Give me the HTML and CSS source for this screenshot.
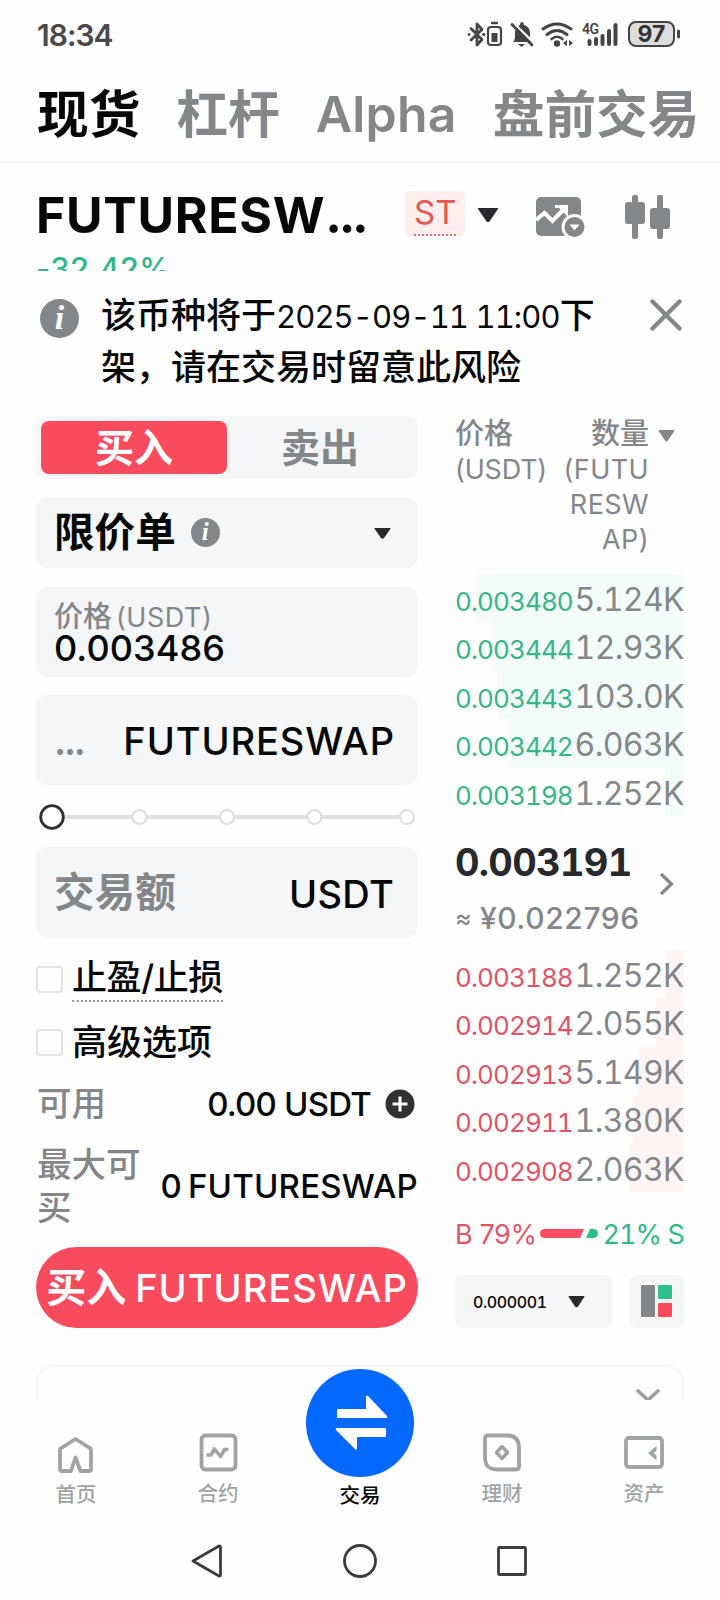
FILE: index.html
```html
<!DOCTYPE html>
<html lang="zh-CN">
<head>
    <meta charset="UTF-8">
    <title>现货交易</title>
    <meta name="viewport" content="width=device-width, initial-scale=1">
    <link rel="stylesheet" href="styles.css">
</head>
<body>
    <div class="status">
        <span class="clock">18:34</span>
        <svg class="status-icons" width="216" height="30" viewBox="0 0 216 30">
            <g fill="none" stroke="#444" stroke-width="2.8" stroke-linecap="round" stroke-linejoin="round">
                <path d="M3 8.500l11 11-5 5.500V4l5 5.500-11 10.500"/>
                <path d="M.5 14.500h.5M15.500 14.500h.5"/>
                <rect x="20" y="7" width="13" height="18" rx="3" stroke-width="2.200"/>
                <path d="M24 3h5" stroke-width="2.400"/>
            </g>
            <rect x="23.500" y="13" width="6" height="9" fill="#444"/>
            <path d="M45 22c2-2 2-4 2-8 0-6 2-8 5-9 0-4 4-4 4 0 4 1 6 4 6 9 0 4 0 6 3 8z" fill="#444"/>
            <path d="M50 24h7l-3.500 3z" fill="#444"/>
            <path d="M44 2l22 21" stroke="#fefefe" stroke-width="2.500"/>
            <path d="M44 4.500l20 20.500" stroke="#444" stroke-width="2.800" stroke-linecap="round"/>
            <g fill="none" stroke="#444" stroke-width="3" stroke-linecap="round">
                <path d="M75 9q14-10 28 0"/>
                <path d="M79 14.500q10-8 20 0"/>
                <path d="M83.500 19q5.500-4.500 11 0" stroke-width="2.600"/>
            </g>
            <circle cx="89" cy="23.500" r="3.200" fill="#444"/>
            <path d="M99 20v6l-4-3zM101 20v6l4-3z" fill="#444"/>
            <text class="net" x="114" y="14">4G</text>
            <g stroke="#444" stroke-width="4" stroke-linecap="round">
                <path d="M121.500 21v3M128 19v5M134.500 16v8M141 11v13M147.500 5v19"/>
            </g>
            <rect x="161" y="2" width="45" height="24" rx="7" fill="#ddd" stroke="#444" stroke-width="2"/>
            <path d="M210.500 11v6" stroke="#444" stroke-width="3" stroke-linecap="round"/>
            <text class="charge" x="183.500" y="22">97</text>
        </svg>
    </div>

    <div class="tabs">
        <span class="tab active">现货</span>
        <span class="tab">杠杆</span>
        <span class="tab latin">Alpha</span>
        <span class="tab last">盘前交易</span>
    </div>

    <div class="pair">
        <span class="pair-name">FUTURESW<span>...</span></span>
        <span class="st"><span>ST</span></span>
        <svg class="pair-caret" width="22" height="16" viewBox="0 0 22 16"><path d="M1.500 1h19q1 0 .5 1l-8.500 12.500q-1.500 1.500-3 0L1 2q-.5-1 .5-1z" fill="#28292c"/></svg>
        <svg class="pair-chart" width="50" height="42" viewBox="0 0 50 42">
            <rect x="0" y="1" width="45" height="39" rx="5" fill="#84878a"/>
            <path d="M0 24l8.500-7 8 8L28 13" fill="none" stroke="#fff" stroke-width="4"/>
            <path d="M19 9h13v12l-4-4-5-5-4 0z" fill="#fff"/>
            <circle cx="38.500" cy="31" r="13" fill="#fefefe"/>
            <circle cx="38.500" cy="31" r="10" fill="#84878a"/>
            <path d="M33.500 28.500h10l-5 6z" fill="#fff"/>
        </svg>
        <svg class="pair-candles" width="46" height="46" viewBox="0 0 46 46" fill="#84878a">
            <rect x="0" y="8" width="20" height="22" rx="3"/>
            <rect x="7" y="1" width="6" height="44" rx="2"/>
            <rect x="25" y="14" width="20" height="21" rx="3"/>
            <rect x="32" y="1" width="6" height="44" rx="2"/>
        </svg>
    </div>
    <div class="change">-32.42%</div>

    <div class="notice">
        <span class="info">i</span>
        <p>该币种将于<span class="date">2025-09-11 11:00</span>下架，请在交易时留意此风险</p>
        <svg width="32" height="32" viewBox="0 0 32 32"><path d="M2.500 2.500l27 27M29.500 2.500l-27 27" stroke="#84878a" stroke-width="4.400" stroke-linecap="round"/></svg>
    </div>

    <div class="trade">
        <div class="form">
            <div class="sides">
                <span class="side buy">买入</span>
                <span class="side">卖出</span>
            </div>
            <div class="field type">
                <span class="type-name">限价单</span>
                <span class="info small">i</span>
                <svg width="17" height="13" viewBox="0 0 17 13"><path d="M1 1h15q1 0 .3 1L10 11q-1.500 1.500-3 0L.7 2Q0 1 1 1z" fill="#28292c"/></svg>
            </div>
            <div class="field price">
                <span class="hint">价格<span class="hint-unit">(USDT)</span></span>
                <span class="value">0.003486</span>
            </div>
            <div class="field amount">
                <span class="dots">...</span>
                <span class="unit">FUTURESWAP</span>
            </div>
            <svg class="slider" width="382" height="32" viewBox="0 0 382 32" fill="#fff">
                <path d="M16 16h355" stroke="#e0e1e2" stroke-width="4"/>
                <g stroke="#dcddde" stroke-width="2">
                    <circle cx="103.500" cy="16" r="7"/>
                    <circle cx="191" cy="16" r="7"/>
                    <circle cx="278.500" cy="16" r="7"/>
                    <circle cx="371" cy="16" r="7"/>
                </g>
                <circle cx="16" cy="16" r="11.300" stroke="#303133" stroke-width="2.800"/>
            </svg>
            <div class="field total">
                <span class="placeholder">交易额</span>
                <span class="unit">USDT</span>
            </div>
            <div class="check"><i></i><span class="dotted">止盈/止损</span></div>
            <div class="check second"><i></i><span>高级选项</span></div>
            <div class="avail">
                <span class="key">可用</span>
                <span class="num">0.00 USDT</span>
                <svg width="30" height="30" viewBox="0 0 30 30"><circle cx="15" cy="15" r="14.500" fill="#303133"/><path d="M15 7.500v15M7.500 15h15" stroke="#fff" stroke-width="3"/></svg>
            </div>
            <div class="max">
                <span class="key">最大可买</span>
                <span class="num">0 FUTURESWAP</span>
            </div>
            <div class="submit"><b>买入</b><span>FUTURESWAP</span></div>
        </div>

        <div class="book">
            <div class="book-head">
                <div>价格<span>(USDT)</span></div>
                <div class="qty">数量<span>(FUTU<br>RESW<br>AP)</span></div>
                <svg width="17" height="12" viewBox="0 0 17 12"><path d="M1 0h15q1 0 .3 1L10 10.500q-1.500 1.500-3 0L.7 1Q0 0 1 0z" fill="#84878a"/></svg>
            </div>
            <div class="rows asks">
                <div class="row"><i style="width:208px"></i><span>0.003480</span><b>5.124K</b></div>
                <div class="row"><i style="width:191px"></i><span>0.003444</span><b>12.93K</b></div>
                <div class="row"><i style="width:186px"></i><span>0.003443</span><b>103.0K</b></div>
                <div class="row"><i style="width:175px"></i><span>0.003442</span><b>6.063K</b></div>
                <div class="row"><i style="width:18px"></i><span>0.003198</span><b>1.252K</b></div>
            </div>
            <div class="last-price">
                <div>
                    <div class="now">0.003191</div>
                    <div class="fiat"><span>≈</span> ¥0.022796</div>
                </div>
                <svg width="16" height="26" viewBox="0 0 16 26"><path d="M2 3l10.500 10L2 23" fill="none" stroke="#84878a" stroke-width="3.200"/></svg>
            </div>
            <div class="rows bids">
                <div class="row"><i style="width:18px"></i><span>0.003188</span><b>1.252K</b></div>
                <div class="row"><i style="width:28px"></i><span>0.002914</span><b>2.055K</b></div>
                <div class="row"><i style="width:45px"></i><span>0.002913</span><b>5.149K</b></div>
                <div class="row"><i style="width:51px"></i><span>0.002911</span><b>1.380K</b></div>
                <div class="row"><i style="width:55px"></i><span>0.002908</span><b>2.063K</b></div>
            </div>
            <div class="ratio">
                <span class="b">B 79%</span>
                <svg width="58" height="10" viewBox="0 0 58 10"><path d="M4.500 0H44l-4 9H4.500a4.500 4.500 0 0 1 0-9z" fill="#f84c61"/><path d="M50 0h3.500a4.500 4.500 0 0 1 0 9H46z" fill="#2bbd88"/></svg>
                <span class="s">21% S</span>
            </div>
            <div class="tools">
                <div class="step">
                    <span>0.000001</span>
                    <svg width="17" height="13" viewBox="0 0 17 13"><path d="M1 1h15q1 0 .3 1L10 11.500q-1.500 1.500-3 0L.7 2Q0 1 1 1z" fill="#28292c"/></svg>
                </div>
                <div class="layout">
                    <svg width="31" height="32" viewBox="0 0 31 32"><rect width="14" height="32" rx="1" fill="#84878a"/><rect x="17" width="14" height="14" rx="1" fill="#2bc08c"/><rect x="17" y="18" width="14" height="14" rx="1" fill="#f84c5c"/></svg>
                </div>
            </div>
        </div>
    </div>

    <div class="sheet">
        <svg width="24" height="14" viewBox="0 0 24 14"><path d="M2 2l10 9L22 2" fill="none" stroke="#9b9ea0" stroke-width="3.600" stroke-linecap="round"/></svg>
    </div>

    <div class="nav">
        <div class="item low">
            <svg width="40" height="40" viewBox="0 0 40 40"><path d="M4.500 14.500L19.500 5l15 9.500q.5 1 .5 2V35q0 2-2 2h-8.500l-5-13.500L15 37H6q-2 0-2-2V16.500q0-1.500.5-2z"/></svg>
            <span>首页</span>
        </div>
        <div class="item">
            <svg width="40" height="40" viewBox="0 0 40 40"><rect x="3.500" y="3.500" width="34" height="34" rx="4"/><path d="M8.500 23h4.500l3.500-6 6 7.500 4-7h4" stroke-width="3.600"/></svg>
            <span>合约</span>
        </div>
        <div class="item low main">
            <svg class="swap" width="108" height="108" viewBox="0 0 108 108"><circle cx="54" cy="54" r="54"/><path d="M32 40h28V27q1-1 2 0l19 20q1 2-1 2H32q-1 0-1-1v-7q0-1 1-1zM79 59q1 0 1 1v7q0 1-1 1H51v12q-1 1-2 0L30 61q-1-2 1-2z"/></svg>
            <span>交易</span>
        </div>
        <div class="item">
            <svg width="40" height="40" viewBox="0 0 40 40"><path d="M6 3.500h19q12 0 12 12v19q0 3-3 3H15q-12 0-12-12v-19q0-3 3-3z"/><path d="M20 14.500l5.500 6-5.500 6-5.500-6z" stroke-width="3.400"/></svg>
            <span>理财</span>
        </div>
        <div class="item">
            <svg width="40" height="40" viewBox="0 0 40 40"><rect x="2" y="6" width="36" height="29" rx="3"/><path d="M32.500 14v5l-3 2 3 2.500v5l-8.500-7.500z" fill="#a0a3a5" stroke="none"/></svg>
            <span>资产</span>
        </div>
    </div>

    <div class="system">
        <svg width="34" height="34" viewBox="0 0 34 34"><path d="M2 17L28 2q1.500 0 1.500 1.500v27q0 1.500-1.500 1.500z"/></svg>
        <svg width="34" height="34" viewBox="0 0 34 34"><circle cx="17" cy="17" r="15.500"/></svg>
        <svg width="34" height="34" viewBox="0 0 34 34"><rect x="3.500" y="3.500" width="27" height="27" rx="1"/></svg>
    </div>
</body>
</html>
```
FILE: styles.css
```css
* { box-sizing: border-box; }
body {
    margin: 0; width: 720px; height: 1600px; overflow: hidden;
    background: #fefefe; color: #060808;
    font-family: Inter, "Noto Sans CJK SC", sans-serif;
    font-weight: 500; white-space: nowrap;
}
svg { display: block; flex: none; }
i { font-style: normal; }

.status { display: flex; justify-content: space-between; height: 72px; padding: 20px 36px 0 37px; }
.clock { font: 600 30px/30px Inter, sans-serif; color: #4a4a4a; letter-spacing: -1px; }
.net { font: 600 14px Roboto, sans-serif; fill: #444; letter-spacing: -0.5px; }
.charge { font: 700 23px Inter, sans-serif; fill: #333; text-anchor: middle; }

.tabs { display: flex; height: 91px; padding: 5px 0 0 37px; border-bottom: 2px solid #f3f4f5; }
.tab { margin-right: 36px; font-size: 51.7px; font-weight: 700; line-height: 74px; color: #84878a; }
.tab.active { color: #060808; }
.tab.latin { font-size: 50px; font-weight: 600; letter-spacing: 0.2px; }
.tab.last { margin-right: 0; }

.pair { display: flex; height: 94px; padding-left: 36px; }
.pair-name { width: 369px; padding-top: 22px; font-size: 50px; font-weight: 700; line-height: 60px; letter-spacing: 0.7px; }
.pair-name span { letter-spacing: -3.4px; }
.st { width: 60px; height: 45px; margin-top: 28px; padding: 3px 9px 0; border-radius: 5px; background: #feeeed; }
.st span { display: block; height: 42px; border-bottom: 2px dotted #e0706a; font-size: 33px; font-weight: 400; line-height: 36px; color: #e4584f; }
.pair-caret { margin: 44px 0 0 12px; }
.pair-chart { margin: 33px 0 0 37px; }
.pair-candles { margin: 31px 0 0 39px; }

.change { height: 14px; margin-left: 36px; overflow: hidden; font-size: 31px; line-height: 24px; letter-spacing: 0.3px; color: #2fb888; }

.notice { display: flex; height: 145px; padding: 19px 0 0 40px; }
.notice p { width: 500px; margin: 0 0 0 22px; font-size: 35px; line-height: 51px; white-space: normal; }
.notice p .date { font-size: 31px; font-weight: 400; font-feature-settings: "tnum"; letter-spacing: -0.9px; white-space: nowrap; }
.notice svg { margin: 9px 0 0 49px; }
.info {
    width: 39px; height: 39px; margin-top: 9px; flex: none; border-radius: 50%; background: #84878a; color: #fff;
    font: italic 700 34px/37px "Liberation Serif", serif; text-align: center;
}
.info.small { width: 29px; height: 29px; margin: 0 0 0 15px; font-size: 25px; line-height: 27px; }

.trade { display: flex; height: 949px; padding-left: 36px; }
.form { width: 382px; }
.sides { display: flex; height: 63px; padding: 5px; border-radius: 12px; background: #f4f6f7; }
.side { flex: 1; border-radius: 8px; font-size: 39px; line-height: 54px; text-align: center; color: #84878a; font-weight: 700; }
.side.buy { background: #f84c5e; color: #fff; }
.field { display: flex; align-items: center; border-radius: 12px; background: #f4f6f7; padding: 0 24px 0 18px; }
.type { height: 71px; margin-top: 18px; font-size: 40.6px; font-weight: 700; padding-right: 27px; }
.type-name { height: 71px; line-height: 71px; }
.type svg { margin-left: auto; margin-top: 2px; }
.price { height: 90px; margin-top: 19px; flex-direction: column; align-items: flex-start; padding-top: 16px; }
.hint { height: 27px; font-size: 29px; line-height: 28px; color: #84878a; }
.hint-unit { margin-left: 4px; font-size: 27px; letter-spacing: 0.5px; font-weight: 400; }
.value { font-size: 36px; line-height: 36px; letter-spacing: 0.1px; }
.amount { height: 90px; margin-top: 18px; padding-top: 2px; justify-content: space-between; }
.dots { font-size: 38px; font-weight: 600; color: #84878a; letter-spacing: -2.2px; }
.unit { font-size: 38px; letter-spacing: 0.9px; }
.amount .unit { margin-right: -1px; }
.slider { margin: 16px 0 14px; }
.total { height: 91px; justify-content: space-between; }
.total .unit { padding-top: 2px; letter-spacing: 0.3px; }
.placeholder { height: 91px; line-height: 91px; font-size: 40.6px; font-weight: 700; color: #84878a; }
.check { display: flex; align-items: center; height: 46px; margin-top: 18px; font-size: 35px; }
.check i { width: 27px; height: 27px; margin: 1px 9px 0 0; border: 2px solid #e2e3e5; border-radius: 4px; }
.check span { height: 46px; line-height: 43px; }
.check .dotted { border-bottom: 2px dotted #9a9c9e; letter-spacing: -0.4px; }
.check.second { margin-top: 17px; }
.check.second span { line-height: 47px; }
.avail { display: flex; align-items: center; height: 50px; margin-top: 14px; padding-right: 3px; }
.key { padding-left: 1px; font-size: 34.5px; line-height: 43px; color: #84878a; }
.num { margin-left: auto; font-size: 33px; letter-spacing: -0.8px; }
.avail .key { height: 50px; line-height: 49px; }
.avail svg { margin-left: 14px; }
.max { display: flex; align-items: center; height: 86px; margin-top: 13px; }
.max .key { width: 108px; padding-top: 1px; white-space: normal; }
.max .num { padding-top: 2px; word-spacing: -3px; letter-spacing: 0.2px; }
.submit { display: flex; align-items: center; justify-content: center; height: 81px; margin-top: 19px; border-radius: 41px; background: #f84c5e; color: #fff; font-size: 38px; letter-spacing: 1px; }
.submit b { height: 81px; line-height: 81px; font-size: 40px; margin-right: 9px; letter-spacing: 0; }

.book { width: 230px; margin-left: 37px; }
.book-head { display: flex; height: 158px; font-size: 29px; line-height: 36px; color: #84878a; }
.book-head span { display: block; padding-top: 1px; font-size: 27px; font-weight: 400; line-height: 34.8px; letter-spacing: -0.2px; }
.qty { width: 104px; text-align: right; }
.book-head .qty span { letter-spacing: 0.4px; }
.book-head div:first-child { width: 90px; }
.book-head svg { margin: 14px 0 0 9px; }
.rows { height: 242px; }
.row { position: relative; display: flex; align-items: baseline; justify-content: space-between; width: 229px; height: 48.4px; line-height: 52px; font-weight: 400; font-feature-settings: "tnum"; }
.row i { position: absolute; z-index: -1; top: 0; right: 0; height: 48.4px; background: #f3fcf9; }
.row span { font-size: 26px; letter-spacing: -0.9px; }
.row b { font-size: 32px; font-weight: 400; color: #84878a; letter-spacing: -0.6px; }
.asks span { color: #35b588; }
.bids span { color: #e05468; }
.bids i { background: #fff4f4; }
.last-price { display: flex; height: 134px; }
.last-price > div { width: 204px; }
.now { padding-top: 22px; font-size: 38px; font-weight: 700; line-height: 48px; color: #28292c; font-feature-settings: "tnum"; letter-spacing: -0.7px; }
.fiat { padding-top: 12px; font-size: 30px; line-height: 40px; color: #84878a; letter-spacing: 0.6px; }
.fiat span { font-size: 25px; vertical-align: 2px; margin-right: -1px; }
.last-price svg { margin-top: 55px; }
.ratio { display: flex; align-items: center; justify-content: space-between; width: 229px; height: 40px; margin-top: 22px; font-size: 27px; font-weight: 400; letter-spacing: -0.4px; }
.b { color: #e05468; }
.s { color: #2fb888; font-feature-settings: "tnum"; letter-spacing: -0.9px; }
.tools { display: flex; justify-content: space-between; width: 229px; margin-top: 21px; }
.step { display: flex; align-items: center; width: 157px; height: 53px; padding-left: 18px; border-radius: 8px; background: #f4f6f7; font-size: 16px; font-feature-settings: "tnum"; letter-spacing: -0.4px; }
.step svg { margin-left: auto; margin-right: 27px; }
.layout { width: 55px; height: 53px; padding: 10px 12px; border-radius: 8px; background: #f4f6f7; }

.sheet { height: 35px; margin: 0 36px; padding: 22px 22px 0 0; border: 2px solid #f4f5f6; border-bottom: 0; border-radius: 18px 18px 0 0; overflow: hidden; }
.sheet svg { margin-left: auto; }
.nav { display: flex; justify-content: space-between; height: 122px; padding: 31px 36px 0; }
.item { width: 80px; text-align: center; font-size: 20.5px; line-height: 30px; color: #a0a3a5; }
.item svg { margin: 1px auto 7px; fill: none; stroke: #a0a3a5; stroke-width: 3.8; stroke-linejoin: round; }
.item.low svg { margin: 3px auto 6px; }
.item.main { color: #060808; }
.item.main .swap { margin: -62px -14px 4px; stroke: none; }
.item .swap circle { fill: #0568ff; }
.item .swap path { fill: #fff; }
.system { display: flex; justify-content: center; gap: 118px; padding-top: 22px; }
.system svg { fill: none; stroke: #3c3c3c; stroke-width: 2.8; stroke-linejoin: round; }
```
